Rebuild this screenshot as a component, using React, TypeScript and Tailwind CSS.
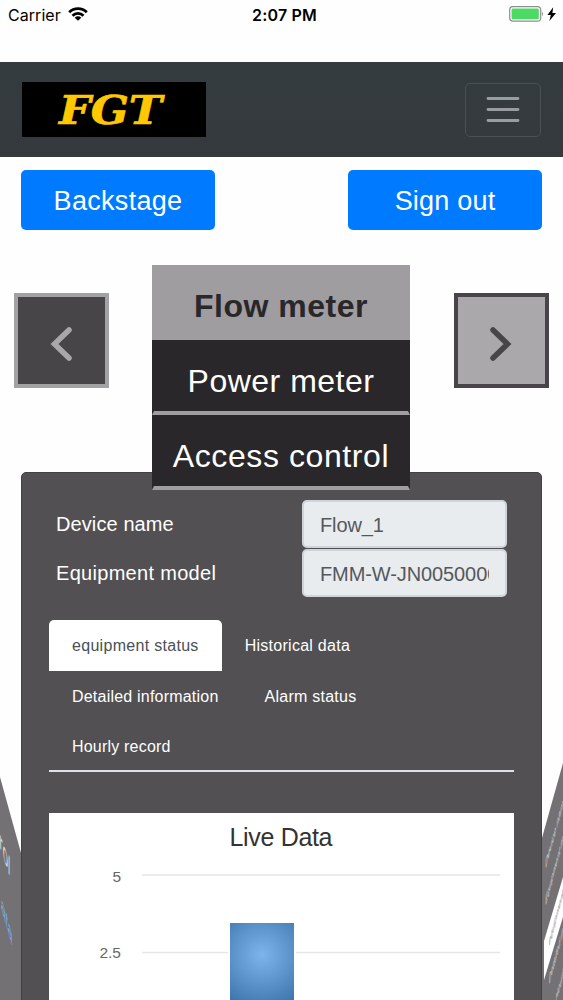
import React from "react";

const menuItems = [
  { label: "Power meter", spacing: "tracking-[0.5px]" },
  { label: "Access control", spacing: "tracking-[0.6px]" },
];

const fields = [
  { label: "Device name", value: "Flow_1", spacing: "tracking-[0.1px]" },
  { label: "Equipment model", value: "FMM-W-JN00500000", spacing: "tracking-[0.3px]" },
];

const tabs = [
  { label: "equipment status", style: "h-[51px] rounded-t-[5px] bg-white text-[#495057] tracking-[0.3px]" },
  { label: "Historical data", style: "h-[50px] tracking-[0.27px]" },
  { label: "Detailed information", style: "h-[50px] tracking-[0.21px]" },
  { label: "Alarm status", style: "h-[50px] tracking-[0.25px]" },
  { label: "Hourly record", style: "h-[50px] tracking-[0.2px]" },
];

const StatusBar = () => (
  <div className="grid grid-cols-3 h-[62px] pt-[5px] px-2 items-start text-black leading-5">
    <div className="flex items-center font-['Inter','Liberation_Sans',sans-serif] text-[16px] tracking-[0.05px]">
      Carrier
      <svg className="ml-[7px] -mt-0.5" width="20" height="14" viewBox="0 0 20 14" fill="none" stroke="black" strokeWidth="2.8">
        <path d="M1.2 5.3a12.4 12.4 0 0 1 17.6 0" />
        <path d="M4.5 8.7a7.8 7.8 0 0 1 11 0" />
        <path d="M10 13.8 6.7 10.7a4.6 4.6 0 0 1 6.6 0z" fill="black" stroke="none" />
      </svg>
    </div>
    <div className="text-center font-semibold font-['Inter','Liberation_Sans',sans-serif] text-[16px] tracking-[0.2px] pl-[6px] whitespace-nowrap">
      2:07 PM
    </div>
    <div className="flex justify-end items-center h-[18px] -mr-[2px]">
      <svg width="48" height="16" viewBox="0 0 48 16">
        <rect x="0.7" y="0.7" width="31" height="14.4" rx="3.2" fill="none" stroke="#8e8e8e" strokeWidth="1.2" />
        <rect x="2.6" y="2.6" width="27.2" height="10.6" rx="1.2" fill="#4cd964" />
        <path d="M33 5.5q2 2.4 0 4.8z" fill="#8e8e8e" />
        <path d="M44.2 1.2 38.4 8.9h3.4L40.4 14.9l6.6-8h-3.6z" fill="black" />
      </svg>
    </div>
  </div>
);

const Navbar = () => (
  <nav className="flex justify-between items-center h-[95px] px-[22px] bg-linear-to-b from-[#343c3f] to-[#35393e]">
    <svg className="bg-black" width="184" height="55" viewBox="0 0 184 55">
      <text
        x="37"
        y="42"
        textLength="103"
        lengthAdjust="spacingAndGlyphs"
        fill="#ffc800"
        stroke="#ffc800"
        strokeWidth="0.7"
        className="font-['DejaVu_Serif',serif] font-bold italic text-[40px]"
      >
        FGT
      </text>
    </svg>
    <button className="flex items-center justify-center w-[76px] h-[54px] rounded-[5px] border border-[#4b5054]">
      <svg width="34" height="27" viewBox="0 0 34 27" stroke="#9a9d9f" strokeWidth="2.8" strokeLinecap="round">
        <path d="M2 2.5h30M2 13.5h30M2 24.5h30" />
      </svg>
    </button>
  </nav>
);

const Selector = () => (
  <div className="relative z-10 flex justify-between items-start px-[14px] mt-[35px]">
    <button className="flex items-center justify-center mt-7 w-[95px] h-[95px] border-4 border-[#a2a1a3] bg-[#474548]">
      <svg className="mt-1.5 -ml-0.5" width="24" height="36" viewBox="0 0 24 36" fill="none" stroke="#a9a7aa" strokeWidth="5.5" strokeLinecap="round">
        <path d="M20 4 5.5 18 20 32" />
      </svg>
    </button>
    <div className="w-[258px] -ml-px text-center text-[32px] text-white">
      <div className="h-[75px] pt-1.5 leading-[70px] bg-[#9f9da0] text-[#29272a] font-bold tracking-[0.5px]">
        Flow meter
      </div>
      {menuItems.map((item) => (
        <div
          key={item.label}
          className="h-[75px] pt-1.5 leading-[70px] bg-[#29272a] border-x-2 border-b-4 border-x-[#29272a] border-b-[#9f9da0]"
        >
          <span className={item.spacing}>{item.label}</span>
        </div>
      ))}
    </div>
    <button className="flex items-center justify-center mt-7 w-[95px] h-[95px] border-4 border-[#474548] bg-[#aaa8ab]">
      <svg className="mt-1.5 -ml-0.5" width="24" height="36" viewBox="0 0 24 36" fill="none" stroke="#474548" strokeWidth="5.5" strokeLinecap="round">
        <path d="M4 4 18.5 18 4 32" />
      </svg>
    </button>
  </div>
);

// neighbouring slides, seen edge-on as the faces of a cube
const LeftFace = () => (
  <svg className="w-[21px] h-[528px] shrink-0" viewBox="0 0 21 528">
    <path d="M0 305 21 381V528H0z" fill="#737173" />
    <text transform="matrix(0.45 1.35 0 1.2 -0.5 374)" fill="#dddcdd" fontSize="21">
      rol
    </text>
    <text transform="matrix(0.48 1.6 0 1.2 1 436)" fill="#7cb5ec" fontSize="17">
      ata
    </text>
  </svg>
);

const RightFace = () => (
  <svg className="w-[21px] h-[528px] shrink-0" viewBox="0 0 21 528">
    <path d="M0 366 21 291V528H0z" fill="#737173" />
    <path d="M2 469 21 405V445L2 508z" fill="white" />
    <g fill="#e4e3e4" fontSize="16">
      <text transform="matrix(0.21 -0.75 0 0.8 3.5 397)">Device name</text>
      <text transform="matrix(0.19 -0.69 0 0.8 3.5 434)">Equipment model</text>
      <text transform="matrix(0.19 -0.69 0 0.8 7 513)">Detailed information</text>
      <text transform="matrix(0.19 -0.69 0 0.8 14 531)">Hourly record</text>
    </g>
    <text transform="matrix(0.19 -0.69 0 0.8 7 475)" fill="#6b6b6d" fontSize="16">
      equipment status
    </text>
  </svg>
);

const Chart = () => (
  <svg className="block bg-white" width="465" height="190" viewBox="0 0 465 190">
    <defs>
      <radialGradient id="bar" gradientUnits="userSpaceOnUse" cx="213" cy="142" r="58">
        <stop offset="0" stopColor="#7cb5ec" />
        <stop offset="1" stopColor="#3a71a8" />
      </radialGradient>
    </defs>
    <text x="232" y="33" textAnchor="middle" fontSize="25" textLength="103" fill="#333">
      Live Data
    </text>
    <path d="M93 62h358M93 139.5h358" stroke="#e6e6e8" strokeWidth="1.5" />
    <g fontSize="15.5" fill="#666" textAnchor="end">
      <text x="72" y="69">5</text>
      <text x="72" y="145">2.5</text>
    </g>
    <rect x="179" y="109" width="68" height="82" fill="white" />
    <rect x="181" y="110" width="64" height="82" fill="url(#bar)" />
  </svg>
);

const App = () => {
  return (
    <div className="w-[563px] h-[1000px] overflow-hidden bg-[#fefefe] font-['Liberation_Sans',sans-serif]">
      <StatusBar />
      <Navbar />

      <div className="flex justify-between px-[21px] pt-[13px] text-white text-[27px] leading-[60px]">
        <button className="w-[194px] h-[60px] pt-0.5 leading-[58px] rounded-[5px] bg-[#007bff] tracking-[0.3px]">Backstage</button>
        <button className="w-[194px] h-[60px] pt-0.5 leading-[58px] rounded-[5px] bg-[#007bff] tracking-[0.2px]">Sign out</button>
      </div>

      <Selector />

      <div className="flex -mt-[18px]">
        <LeftFace />
        <div className="w-[521px] h-[530px] shrink-0 px-[27px] pt-[27px] rounded-t-[5px] border border-[#434144] bg-[#525053]">
          {fields.map((field) => (
            <div key={field.label} className="flex justify-between items-center mb-px px-[7px] text-[20px] text-white">
              <label className={field.spacing}>{field.label}</label>
              <div className="w-[205px] h-12 px-4 rounded-[5px] border-2 border-[#ced4da] bg-[#e9ecef] text-[#54585c] leading-[46px]">
                <div className="overflow-hidden whitespace-nowrap tracking-[-0.1px]">{field.value}</div>
              </div>
            </div>
          ))}

          <div className="flex flex-wrap mt-[23px] h-[152px] border-b-2 border-[#dee2e6] text-[16px] leading-[51px] text-white">
            {tabs.map((tab) => (
              <div key={tab.label} className={`px-[23px] ${tab.style}`}>
                {tab.label}
              </div>
            ))}
          </div>

          <div className="mt-[41px]">
            <Chart />
          </div>
        </div>
        <RightFace />
      </div>
    </div>
  );
};

export default App;
